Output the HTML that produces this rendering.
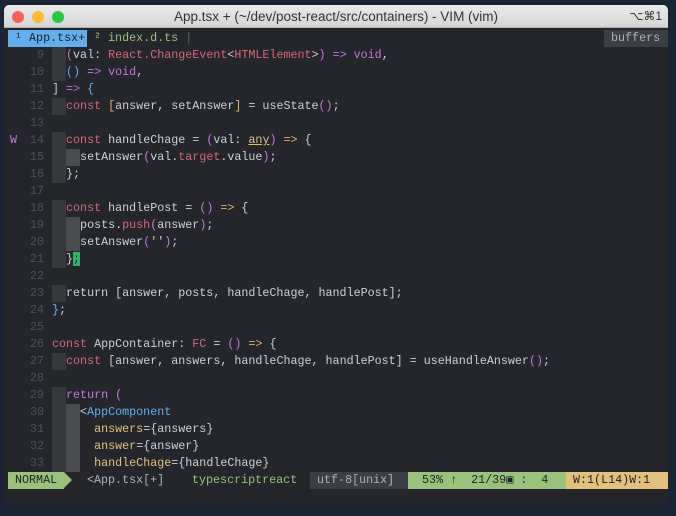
<!DOCTYPE html>
<html><head><meta charset="utf-8"><style>
*{margin:0;padding:0;box-sizing:border-box}
body{width:676px;height:516px;overflow:hidden;background:#1c2536;position:relative;font-family:"Liberation Mono",monospace}
.win{position:absolute;left:4px;top:5px;width:664px;height:500px;background:#24262c;border-radius:5px 5px 0 0;overflow:hidden}
.title{position:absolute;left:0;top:0;width:664px;height:23px;background:linear-gradient(#ebebeb,#d4d4d4);border-bottom:1px solid #b0b0b0;font-family:"Liberation Sans",sans-serif;font-size:13.5px;color:#333;text-align:center;line-height:23px}
.dot{position:absolute;top:6px;width:12px;height:12px;border-radius:50%}
.sc{position:absolute;right:6px;top:0;font-size:12px}
.l{position:absolute;left:0;height:17px;line-height:17px;font-size:11.7px;white-space:pre;color:#ccd0d8}
.n{position:absolute;left:16px;width:24px;text-align:right;color:#4b5059}
.t{position:absolute;left:48px}
.g1{position:absolute;left:48px;width:14px;height:17px;background:#37383c}
.g2{position:absolute;left:62px;width:14px;height:17px;background:#4a4b4f}
.k{color:#d9677a}.p{color:#c678dd}.o{color:#e5b067}.b{color:#61afef}.y{color:#e5c07b}
.st{position:absolute;top:467px;height:17px;line-height:17px;font-size:11.7px;white-space:pre}
</style></head><body>
<div class="win">
<div class="title"><div class="dot" style="left:8px;background:#fc5f57"></div><div class="dot" style="left:28px;background:#fdbb2e"></div><div class="dot" style="left:48px;background:#2ac840"></div>App.tsx + (~/dev/post-react/src/containers) - VIM (vim)<span class="sc">⌥⌘1</span></div>
<div class="l" style="top:25px;left:4px;width:79px;background:#61afef;color:#1e2127"> ¹ App.tsx+</div>
<div class="l" style="top:25px;left:83px;color:#98c379"> ² index.d.ts <span style="color:#5c6370">|</span></div>
<div class="l" style="top:25px;left:600px;width:64px;background:#3b3e45;color:#abb2bf"> buffers</div>

<div class="l" style="top:42px"><span class="n">9</span><span class="g1"></span><span class="t">  <span class="p">(</span>val: <span class="k">React.ChangeEvent</span>&lt;<span class="k">HTMLElement</span>&gt;<span class="p">)</span> <span class="p">=&gt;</span> <span class="p">void</span>,</span></div>
<div class="l" style="top:59px"><span class="n">10</span><span class="g1"></span><span class="t">  <span class="b">()</span> <span class="p">=&gt;</span> <span class="p">void</span>,</span></div>
<div class="l" style="top:76px"><span class="n">11</span><span class="t">] <span class="p">=&gt;</span> <span class="b">{</span></span></div>
<div class="l" style="top:93px"><span class="n">12</span><span class="g1"></span><span class="t">  <span class="k">const</span> <span class="o">[</span>answer, setAnswer<span class="o">]</span> = useState<span class="p">()</span>;</span></div>
<div class="l" style="top:110px"><span class="n">13</span></div>
<div class="l" style="top:127px"><span class="p" style="position:absolute;left:6px">W</span><span class="n">14</span><span class="g1"></span><span class="t">  <span class="k">const</span> handleChage = <span class="p">(</span>val: <span class="y" style="text-decoration:underline">any</span><span class="p">)</span> <span class="o">=&gt;</span> {</span></div>
<div class="l" style="top:144px"><span class="n">15</span><span class="g1"></span><span class="g2"></span><span class="t">    setAnswer<span class="p">(</span>val.<span class="k">target</span>.value<span class="p">)</span>;</span></div>
<div class="l" style="top:161px"><span class="n">16</span><span class="g1"></span><span class="t">  };</span></div>
<div class="l" style="top:178px"><span class="n">17</span></div>
<div class="l" style="top:195px"><span class="n">18</span><span class="g1"></span><span class="t">  <span class="k">const</span> handlePost = <span class="p">()</span> <span class="o">=&gt;</span> {</span></div>
<div class="l" style="top:212px"><span class="n">19</span><span class="g1"></span><span class="g2"></span><span class="t">    posts.<span class="k">push</span><span class="p">(</span>answer<span class="p">)</span>;</span></div>
<div class="l" style="top:229px"><span class="n">20</span><span class="g1"></span><span class="g2"></span><span class="t">    setAnswer<span class="p">(</span>''<span class="p">)</span>;</span></div>
<div class="l" style="top:246px"><span class="n">21</span><span class="g1"></span><span class="t">  }<span style="background:#2fb36a;color:#1e2127">;</span></span></div>
<div class="l" style="top:263px"><span class="n">22</span></div>
<div class="l" style="top:280px"><span class="n">23</span><span class="g1"></span><span class="t">  return [answer, posts, handleChage, handlePost];</span></div>
<div class="l" style="top:297px"><span class="n">24</span><span class="t"><span class="b">}</span>;</span></div>
<div class="l" style="top:314px"><span class="n">25</span></div>
<div class="l" style="top:331px"><span class="n">26</span><span class="t"><span class="k">const</span> AppContainer: <span class="k">FC</span> = <span class="p">()</span> <span class="o">=&gt;</span> {</span></div>
<div class="l" style="top:348px"><span class="n">27</span><span class="g1"></span><span class="t">  <span class="k">const</span> [answer, answers, handleChage, handlePost] = useHandleAnswer<span class="p">()</span>;</span></div>
<div class="l" style="top:365px"><span class="n">28</span></div>
<div class="l" style="top:382px"><span class="n">29</span><span class="g1"></span><span class="t">  <span class="p">return (</span></span></div>
<div class="l" style="top:399px"><span class="n">30</span><span class="g1"></span><span class="g2"></span><span class="t">    &lt;<span class="b">AppComponent</span></span></div>
<div class="l" style="top:416px"><span class="n">31</span><span class="g1"></span><span class="g2"></span><span class="t">      <span class="y">answers</span>={answers}</span></div>
<div class="l" style="top:433px"><span class="n">32</span><span class="g1"></span><span class="g2"></span><span class="t">      <span class="y">answer</span>={answer}</span></div>
<div class="l" style="top:450px"><span class="n">33</span><span class="g1"></span><span class="g2"></span><span class="t">      <span class="y">handleChage</span>={handleChage}</span></div>

<div class="st" style="left:4px;width:56px;background:#98c379;color:#1e2127"> NORMAL</div>
<div style="position:absolute;top:467px;left:60px;width:0;height:0;border-top:8.5px solid transparent;border-bottom:8.5px solid transparent;border-left:8px solid #98c379"></div>
<div class="st" style="left:83px;color:#abb2bf">&lt;App.tsx[+]</div>
<div class="st" style="left:188px;color:#98c379">typescriptreact</div>
<div class="st" style="left:306px;width:98px;background:#3b3e45;color:#abb2bf"> utf-8[unix]</div>
<div class="st" style="left:404px;width:158px;background:#98c379;color:#1e2127">  53% ↑  21/39▣ :  4</div>
<div class="st" style="left:562px;width:102px;background:#e5c07b;color:#1e2127"> W:1(L14)W:1</div>
</div>
</body></html>
